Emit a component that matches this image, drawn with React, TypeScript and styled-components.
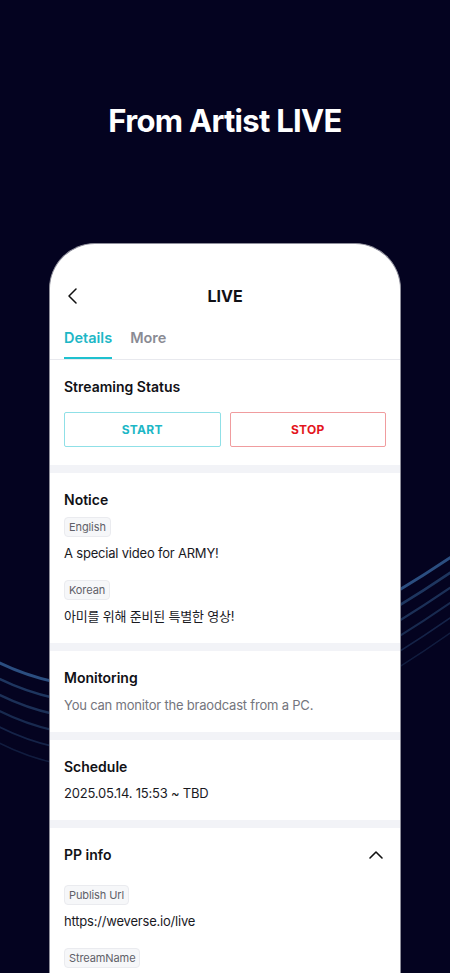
import React from "react";
import styled, { createGlobalStyle } from "styled-components";

const GlobalStyle = createGlobalStyle`
  html, body {
    margin: 0;
    padding: 0;
    background: #040320;
  }
  body {
    font-family: Inter, "Noto Sans", "Noto Sans CJK KR", sans-serif;
    -webkit-font-smoothing: antialiased;
  }
  * { box-sizing: border-box; }
`;

const Page = styled.div`
  position: relative;
  width: 450px;
  height: 973px;
  overflow: hidden;
  background: #040320;
  display: flex;
  flex-direction: column;
  align-items: center;
`;

const WaveLayer = styled.svg`
  position: absolute;
  inset: 0;
  z-index: 0;
  pointer-events: none;
`;

const Title = styled.h1`
  position: relative;
  z-index: 1;
  flex-shrink: 0;
  margin: 101px 0 0;
  font-family: Inter, "Noto Sans", sans-serif;
  font-weight: 700;
  font-size: 31px;
  line-height: 40px;
  letter-spacing: -0.7px;
  color: #ffffff;
`;

const Phone = styled.div`
  position: relative;
  z-index: 1;
  flex-shrink: 0;
  margin-top: 102px;
  width: 352px;
  height: 730px;
  background: #ffffff;
  border: 1px solid #8e8e9a;
  border-bottom: none;
  border-radius: 46px 46px 0 0;
  overflow: hidden;
  padding-top: 28px;
`;

const Header = styled.div`
  height: 48px;
  display: grid;
  grid-template-columns: 40px 1fr 40px;
  align-items: center;
  padding: 0 14px;
`;

const BackButton = styled.div`
  display: flex;
  align-items: center;
  height: 100%;
  padding-left: 3px;
`;

const HeaderTitle = styled.div`
  text-align: center;
  font-weight: 700;
  font-size: 16px;
  color: #111116;
`;

const Tabs = styled.div`
  display: flex;
  gap: 18px;
  padding: 0 14px;
  border-bottom: 1px solid #e8e9ee;
`;

const Tab = styled.div<{ $active?: boolean }>`
  height: 39px;
  padding-top: 8px;
  font-size: 14.5px;
  line-height: 20px;
  font-weight: 600;
  color: ${(p) => (p.$active ? "#1db7c6" : "#8a8b94")};
  border-bottom: 2px solid ${(p) => (p.$active ? "#1fc1cf" : "transparent")};
`;

const Section = styled.section`
  padding: 16px 14px 16px;
  border-bottom: 8px solid #f2f3f7;
`;

const SectionHead = styled.div`
  display: flex;
  align-items: center;
  justify-content: space-between;
`;

const Heading = styled.h2`
  margin: 0;
  font-size: 14px;
  line-height: 22px;
  font-weight: 600;
  color: #111116;
`;

const ButtonRow = styled.div`
  display: grid;
  grid-template-columns: 1fr 1fr;
  gap: 9px;
  margin-top: 14px;
  margin-bottom: 2px;
`;

const ActionButton = styled.button<{ $tone: "start" | "stop" }>`
  height: 35px;
  background: #ffffff;
  border: 1.5px solid ${(p) => (p.$tone === "start" ? "#8fe0e7" : "#f09c9e")};
  border-radius: 2px;
  font-family: Inter, "Noto Sans", sans-serif;
  font-size: 12px;
  font-weight: 700;
  letter-spacing: 0.3px;
  color: ${(p) => (p.$tone === "start" ? "#1db7c6" : "#e3161d")};
  padding: 0;
`;

const Tag = styled.span<{ $gap?: number }>`
  display: inline-flex;
  align-items: center;
  height: 20px;
  padding: 0 4px;
  margin-top: ${(p) => p.$gap ?? 6}px;
  background: #f6f7f9;
  border: 1px solid #eaebef;
  border-radius: 4px;
  font-size: 11px;
  letter-spacing: -0.1px;
  color: #5f6068;
  align-self: flex-start;
`;

const Block = styled.div`
  display: flex;
  flex-direction: column;
`;

const Body = styled.p<{ $muted?: boolean; $gap?: number }>`
  margin: ${(p) => p.$gap ?? 5}px 0 0;
  font-size: 13px;
  line-height: 22px;
  letter-spacing: -0.2px;
  color: ${(p) => (p.$muted ? "#74757d" : "#1a1a1f")};
  font-family: Inter, "Noto Sans", "Noto Sans CJK KR", sans-serif;
`;

const Chevron = styled.svg`
  display: block;
`;

const waves = [0, 1, 2, 3, 4, 5];

export default function App() {
  return (
    <>
      <GlobalStyle />
      <Page>
        <WaveLayer width="450" height="973" viewBox="0 0 450 973">
          {waves.map((i) => (
            <path
              key={i}
              d={`M -10 ${658 + 16 * i} Q 165 ${752 + 17 * i} 460 ${551 + 15 * i}`}
              fill="none"
              stroke={i === 0 ? "#2d5286" : "#26446f"}
              strokeWidth={[3, 2.6, 2.4, 2.1, 1.8, 1.4][i]}
              opacity={[0.95, 0.8, 0.7, 0.6, 0.5, 0.4][i]}
            />
          ))}
        </WaveLayer>
        <Title>From Artist LIVE</Title>
        <Phone>
          <Header>
            <BackButton>
              <Chevron width="10" height="16" viewBox="0 0 10 16">
                <path d="M9 1 L2 8 L9 15" fill="none" stroke="#111" strokeWidth="1.5" strokeLinecap="round" strokeLinejoin="round" />
              </Chevron>
            </BackButton>
            <HeaderTitle>LIVE</HeaderTitle>
            <div />
          </Header>
          <Tabs>
            <Tab $active>Details</Tab>
            <Tab>More</Tab>
          </Tabs>
          <Section>
            <Heading>Streaming Status</Heading>
            <ButtonRow>
              <ActionButton $tone="start">START</ActionButton>
              <ActionButton $tone="stop">STOP</ActionButton>
            </ButtonRow>
          </Section>
          <Section>
            <Block>
              <Heading>Notice</Heading>
              <Tag>English</Tag>
              <Body>A special video for ARMY!</Body>
              <Tag $gap={16}>Korean</Tag>
              <Body>아미를 위해 준비된 특별한 영상!</Body>
            </Block>
          </Section>
          <Section>
            <Heading>Monitoring</Heading>
            <Body $muted $gap={5}>You can monitor the braodcast from a PC.</Body>
          </Section>
          <Section>
            <Heading>Schedule</Heading>
            <Body $gap={4}>2025.05.14. 15:53 ~ TBD</Body>
          </Section>
          <Section>
            <Block>
              <SectionHead>
                <Heading>PP info</Heading>
                <Chevron width="20" height="20" viewBox="0 0 20 20">
                  <path d="M4 13 L10 7 L16 13" fill="none" stroke="#111" strokeWidth="1.6" strokeLinecap="round" strokeLinejoin="round" />
                </Chevron>
              </SectionHead>
              <Tag $gap={19}>Publish Url</Tag>
              <Body>https://weverse.io/live</Body>
              <Tag $gap={16}>StreamName</Tag>
            </Block>
          </Section>
        </Phone>
      </Page>
    </>
  );
}
